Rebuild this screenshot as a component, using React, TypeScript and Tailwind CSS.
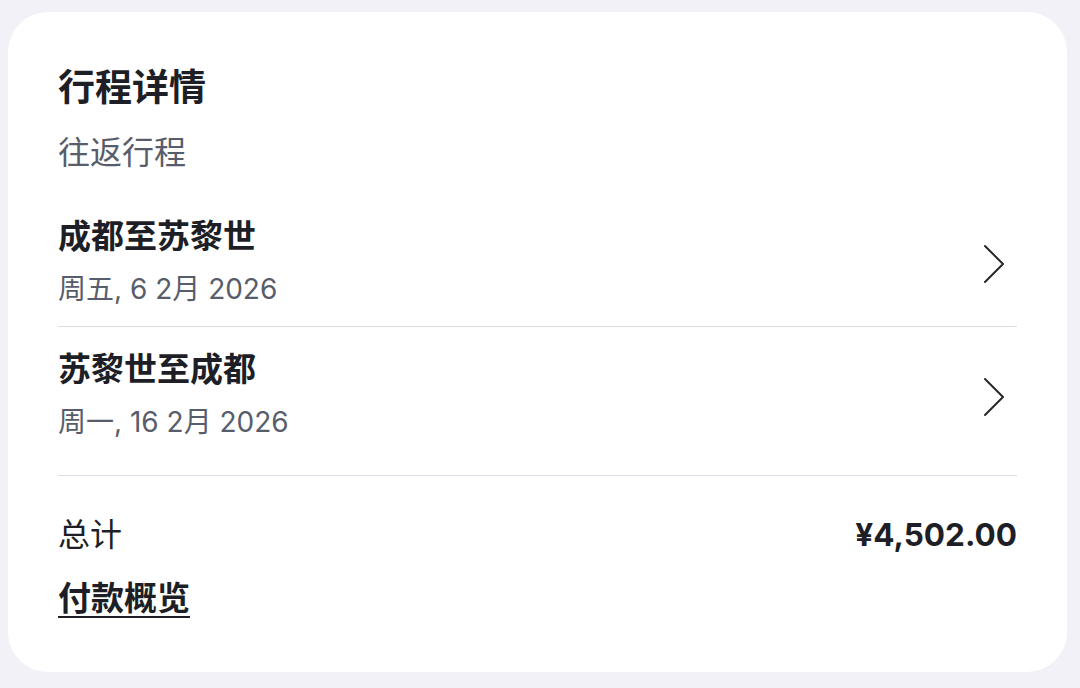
import React from "react";

const Chevron = () => (
  <svg width="22" height="40" viewBox="0 0 22 40" fill="none" className="shrink-0">
    <polyline points="2,2 20,20 2,38" stroke="#26262c" strokeWidth="2" strokeLinecap="round" strokeLinejoin="round" />
  </svg>
);

const Row = ({ title, date, last }: { title: string; date: string; last?: boolean }) => (
  <div className={`flex items-center justify-between border-b border-[#dddde8] ${last ? "pt-[22px] pb-[35px]" : "pt-[22px] pb-[19px]"}`}>
    <div className="flex flex-col">
      <div className="text-[33px] leading-[40px] font-bold text-[#1e1f26]">{title}</div>
      <div className="mt-[15px] text-[28px] leading-[36px] text-[#575d6a]">{date}</div>
    </div>
    <div className="mr-[12px] mt-[4px]">
      <Chevron />
    </div>
  </div>
);

export default function App() {
  return (
    <div
      className="w-[1080px] h-[688px] bg-[#f1f1f7] pt-[12px] pl-[8px] overflow-hidden"
      style={{ fontFamily: '"Inter", "Noto Sans CJK SC", sans-serif' }}
    >
      <div className="w-[1059px] h-[660px] bg-white rounded-[40px] px-[50px] pt-[54px]">
        <div className="text-[37px] leading-[44px] font-bold text-[#1e1f26]">行程详情</div>
        <div className="mt-[23px] text-[32px] leading-[40px] text-[#575d6a]">往返行程</div>
        <div className="mt-[21px]">
          <Row title="成都至苏黎世" date="周五, 6 2月 2026" />
          <Row title="苏黎世至成都" date="周一, 16 2月 2026" last />
        </div>
        <div className="mt-[39px] flex items-center justify-between">
          <div className="text-[32px] leading-[40px] text-[#1e1f26]">总计</div>
          <div className="text-[31.5px] leading-[40px] font-bold text-[#1e1f26]">¥4,502.00</div>
        </div>
        <div className="mt-[23px] text-[33px] leading-[40px] font-bold text-[#1e1f26] underline underline-offset-[6px] decoration-[2px]">
          付款概览
        </div>
      </div>
    </div>
  );
}
